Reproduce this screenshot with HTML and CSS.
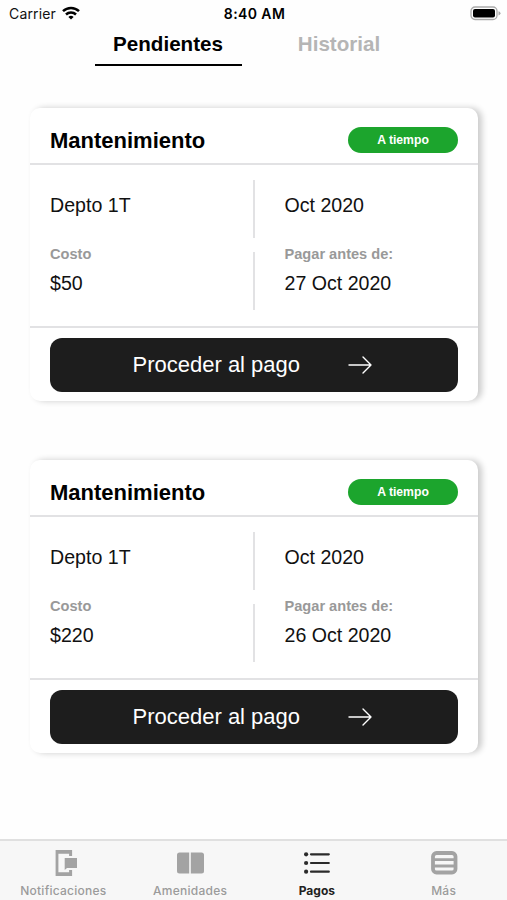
FILE: index.html
```html
<!DOCTYPE html>
<html lang="es">
<head>
    <meta charset="UTF-8">
    <meta name="viewport" content="width=device-width, initial-scale=1.0">
    <title>Pagos</title>
    <link rel="stylesheet" href="styles.css">
</head>
<body>
    <header class="status-bar">
        <div class="carrier">
            <span>Carrier</span>
            <svg width="18" height="14" viewBox="0 0 18 14" fill="none" stroke="#000" stroke-width="2.5">
                <path d="M1 5.1a11.6 11.6 0 0 1 16 0"/>
                <path d="M4 8.5a7.2 7.2 0 0 1 10 0"/>
                <path d="M9 13.6 6.4 10.9a3.8 3.8 0 0 1 5.2 0z" fill="#000" stroke="none"/>
            </svg>
        </div>
        <div class="clock">8:40 AM</div>
        <div class="battery">
            <svg width="31" height="15" viewBox="0 0 31 15">
                <rect x="1" y="1" width="26" height="12.5" rx="4" fill="#fff" stroke="#aaa" stroke-width="1.3"/>
                <rect x="3" y="3" width="22" height="8.5" rx="2" fill="#000"/>
                <path d="M28.5 5.2q2 .7 2 2.1t-2 2.1z" fill="#aaa"/>
            </svg>
        </div>
    </header>

    <nav class="tabs">
        <div class="tab active">Pendientes</div>
        <div class="tab">Historial</div>
    </nav>

    <main class="payments">
        <section class="card">
            <div class="card-header">
                <h2>Mantenimiento</h2>
                <span class="badge">A tiempo</span>
            </div>
            <div class="card-body">
                <div class="cell">
                    <p class="value">Depto 1T</p>
                </div>
                <div class="cell right">
                    <p class="value">Oct 2020</p>
                </div>
                <div class="cell">
                    <p class="label">Costo</p>
                    <p class="value">$50</p>
                </div>
                <div class="cell right">
                    <p class="label">Pagar antes de:</p>
                    <p class="value">27 Oct 2020</p>
                </div>
            </div>
            <div class="card-footer">
                <button class="pay-btn">
                    <span>Proceder al pago</span>
                    <svg width="24" height="18" viewBox="0 0 24 18" fill="none" stroke="#fff" stroke-width="1.4" stroke-linecap="round" stroke-linejoin="round">
                        <path d="M1 9h22M15 1l8 8-8 8"/>
                    </svg>
                </button>
            </div>
        </section>

        <section class="card">
            <div class="card-header">
                <h2>Mantenimiento</h2>
                <span class="badge">A tiempo</span>
            </div>
            <div class="card-body">
                <div class="cell">
                    <p class="value">Depto 1T</p>
                </div>
                <div class="cell right">
                    <p class="value">Oct 2020</p>
                </div>
                <div class="cell">
                    <p class="label">Costo</p>
                    <p class="value">$220</p>
                </div>
                <div class="cell right">
                    <p class="label">Pagar antes de:</p>
                    <p class="value">26 Oct 2020</p>
                </div>
            </div>
            <div class="card-footer">
                <button class="pay-btn">
                    <span>Proceder al pago</span>
                    <svg width="24" height="18" viewBox="0 0 24 18" fill="none" stroke="#fff" stroke-width="1.4" stroke-linecap="round" stroke-linejoin="round">
                        <path d="M1 9h22M15 1l8 8-8 8"/>
                    </svg>
                </button>
            </div>
        </section>
    </main>

    <nav class="bottom-nav">
        <div class="nav-item">
            <svg width="28" height="28" viewBox="0 0 28 28" fill="#a3a3a3">
                <path d="M6.600 1h16.500v6h-3V4.800H9.400v18.400h10.700v-2.200h3v6H6.600z"/>
                <path d="M15.700 9H28v10H18l-2.300 2z"/>
            </svg>
            <span>Notificaciones</span>
        </div>
        <div class="nav-item">
            <svg width="28" height="28" viewBox="0 0 28 28" fill="#a3a3a3">
                <path d="M3.500 3.500h9.700v21H3.500A2.500 2.500 0 0 1 1 22V6a2.500 2.500 0 0 1 2.500-2.500z"/>
                <path d="M14.800 3.500H25.500A2.500 2.500 0 0 1 28 6v16a2.500 2.500 0 0 1-2.500 2.500H14.800z"/>
            </svg>
            <span>Amenidades</span>
        </div>
        <div class="nav-item active">
            <svg width="28" height="28" viewBox="0 0 28 28" fill="#2b2b2b">
                <circle cx="3.100" cy="5.300" r="2.100"/>
                <circle cx="3.100" cy="14" r="2.100"/>
                <circle cx="3.100" cy="22.700" r="2.100"/>
                <path d="M8 5.300h17.800M8 14h17.800M8 22.700h17.800" stroke="#2b2b2b" stroke-width="2.200" stroke-linecap="round"/>
            </svg>
            <span>Pagos</span>
        </div>
        <div class="nav-item">
            <svg width="28" height="28" viewBox="0 0 28 28" fill="none" stroke="#a3a3a3">
                <rect x="3" y="4" width="22.500" height="19.500" rx="3.500" stroke-width="3.800"/>
                <path d="M3 10.600h22M3 17h22" stroke-width="2.800"/>
            </svg>
            <span>Más</span>
        </div>
    </nav>
</body>
</html>
```
FILE: styles.css
```css
* {
    box-sizing: border-box;
}

body {
    display: flex;
    flex-direction: column;
    height: 900px;
    margin: 0;
    background: #fefefe;
    color: #111;
    font-family: "Liberation Sans", Arial, sans-serif;
    overflow: hidden;
}

h2, p {
    margin: 0;
}

svg {
    display: block;
}

.status-bar {
    display: grid;
    grid-template-columns: 1fr auto 1fr;
    align-items: center;
    height: 28px;
    padding: 0 6px 2px 9px;
    font-family: Inter, sans-serif;
    font-size: 14px;
}

.carrier {
    display: flex;
    align-items: center;
    gap: 6px;
}

.carrier span {
    letter-spacing: 0.15px;
}

.clock {
    padding-right: 1px;
    font-weight: 600;
    letter-spacing: 0.4px;
    color: #000;
}

.battery {
    justify-self: end;
}

.tabs {
    display: flex;
    justify-content: center;
    gap: 24px;
    height: 38px;
}

.tab {
    width: 147px;
    padding-top: 4px;
    border-bottom: 2px solid transparent;
    font-size: 20.6px;
    font-weight: bold;
    line-height: 24px;
    text-align: center;
    color: #b5b5b5;
}

.tab.active {
    border-color: #000;
    color: #000;
}

.payments {
    display: flex;
    flex: 1;
    flex-direction: column;
    gap: 59px;
    padding: 42px 29px 0 30px;
}

.card {
    height: 293px;
    border-radius: 10px;
    background: #fff;
    box-shadow: 4px 0 6px rgba(0, 0, 0, 0.2);
}

.card-header {
    display: flex;
    align-items: center;
    justify-content: space-between;
    height: 57px;
    padding: 8px 20px 0;
    border-bottom: 2px solid #e2e2e4;
}

.card-header h2 {
    padding-top: 2px;
    font-size: 22px;
    line-height: 26px;
    color: #000;
}

.badge {
    width: 110px;
    border-radius: 13px;
    background: #1ca52d;
    color: #fff;
    font-size: 12.2px;
    font-weight: bold;
    line-height: 26px;
    text-align: center;
}

.card-body {
    display: grid;
    grid-template-columns: 225px 1fr;
    grid-template-rows: 58px 58px;
    row-gap: 14px;
    height: 163px;
    padding-top: 15px;
    border-bottom: 2px solid #e2e2e4;
}

.cell {
    display: flex;
    flex-direction: column;
    padding: 13px 0 0 20px;
    border-right: 2px solid #e2e2e4;
}

.cell.right {
    padding-left: 29.5px;
    border-right: none;
}

.value {
    font-size: 19.6px;
    line-height: 24px;
}

.label {
    margin-top: -24px;
    color: #999;
    font-size: 14.6px;
    font-weight: bold;
    line-height: 26px;
}

.label + .value {
    padding-top: 4px;
}

/* label rows sit higher than the plain ones */
.cell:nth-child(n+3) {
    padding-top: 13px;
}

.card-footer {
    padding: 10px 20px;
}

.pay-btn {
    display: flex;
    align-items: center;
    gap: 48px;
    width: 100%;
    height: 54px;
    padding: 0 0 0 82.5px;
    border: none;
    border-radius: 12px;
    background: #1d1d1d;
    color: #fff;
    font-family: inherit;
    font-size: 22px;
}

.bottom-nav {
    display: flex;
    height: 61px;
    border-top: 2px solid #e0e0e0;
    background: #f7f7f7;
}

.nav-item {
    display: flex;
    flex: 1;
    flex-direction: column;
    align-items: center;
    gap: 5px;
    padding-top: 8px;
    color: #9b9b9b;
    font-family: Inter, sans-serif;
    font-size: 12px;
    font-weight: 500;
    letter-spacing: 0.25px;
    line-height: 18px;
}

.nav-item.active {
    color: #222;
    font-weight: 700;
    letter-spacing: 0;
}
```
